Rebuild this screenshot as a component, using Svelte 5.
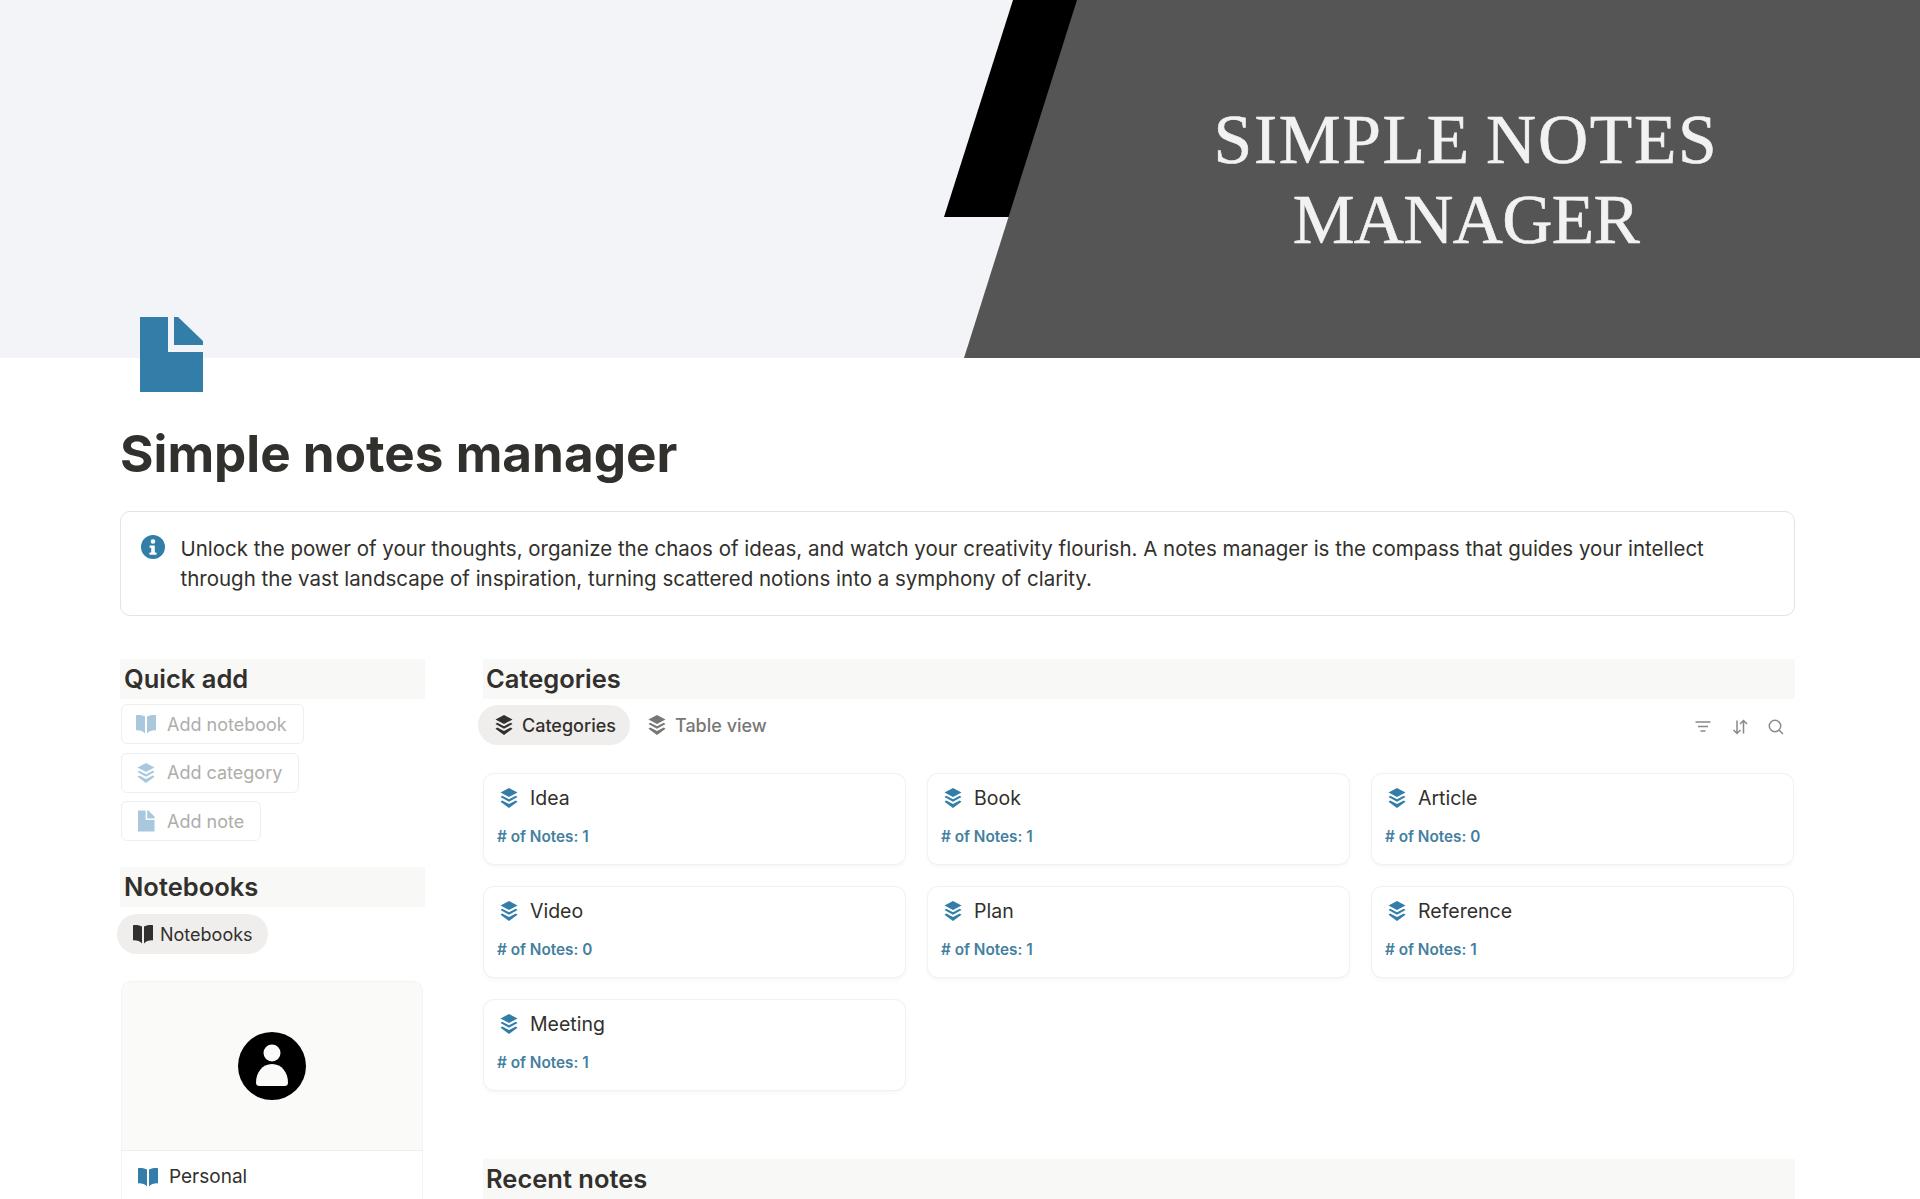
<script>
  const categorias = [
    { name: 'Idea', notes: 1 },
    { name: 'Book', notes: 1 },
    { name: 'Article', notes: 0 },
    { name: 'Video', notes: 0 },
    { name: 'Plan', notes: 1 },
    { name: 'Reference', notes: 1 },
    { name: 'Meeting', notes: 1 }
  ];

  const layers = 'M12 2 20.500 6.500 12 11 3.500 6.500Z M5.200 9.700 12 13.300 18.800 9.700 20.500 11 12 15.700 3.500 11Z M5.200 14.400 12 18 18.800 14.400 20.500 15.700 12 22 3.500 15.700Z';
  const book = 'M11 4.600C9 3.400 5.600 2.800 2 3.200V18.400C5.600 18.200 9 19 11 21.600Z M13 4.600C15 3.400 18.400 2.800 22 3.200V18.400C18.400 18.200 15 19 13 21.600Z';
  const doc = 'M4 1.500H11.600V11H20.500V22.500H4Z M13.200 1.500H14.400L20.500 7.600V9.400H13.200Z';
</script>

<div class="page">
  <header class="cover">
    <div class="franja"></div>
    <div class="gris"></div>
    <div class="cover-title">SIMPLE NOTES<br /><span>MANAGER</span></div>
  </header>

  <main class="content">
    <svg class="page-icon" viewBox="0 0 63 75" aria-hidden="true">
      <path d="M0 0H28V35H63V75H0Z M34 0H38L63 24V28H34Z" fill="#337ea9" />
    </svg>

    <h1>Simple notes manager</h1>

    <div class="callout">
      <svg class="info" viewBox="0 0 24 24" aria-hidden="true">
        <path fill-rule="evenodd" d="M12 0a12 12 0 1 0 0 24 12 12 0 0 0 0-24Zm0 4.200a2.300 2.300 0 1 1 0 4.600 2.300 2.300 0 0 1 0-4.600ZM8.600 10.400h5.200v7h1.700v2.400h-7v-2.400h1.700v-4.600H8.600Z" fill="#337ea9" />
      </svg>
      <p>Unlock the power of your thoughts, organize the chaos of ideas, and watch your creativity flourish. A notes manager is the compass that guides your intellect through the vast landscape of inspiration, turning scattered notions into a symphony of clarity.</p>
    </div>

    <div class="columns">
      <aside class="left">
        <h2>Quick add</h2>
        <div class="quick">
          <button class="add">
            <svg viewBox="0 0 24 24"><path d={book} /></svg>
            Add notebook
          </button>
          <button class="add">
            <svg viewBox="0 0 24 24"><path d={layers} /></svg>
            Add category
          </button>
          <button class="add">
            <svg viewBox="0 0 24 24"><path d={doc} /></svg>
            Add note
          </button>
        </div>

        <h2 class="second">Notebooks</h2>
        <div class="pill notebooks">
          <svg viewBox="0 0 24 24"><path d={book} /></svg>
          Notebooks
        </div>

        <div class="gallery-card">
          <div class="gallery-cover">
            <svg class="avatar" viewBox="0 0 68 68" aria-hidden="true">
              <circle cx="34" cy="34" r="34" fill="#000" />
              <circle cx="34" cy="21" r="8.500" fill="#fafaf8" />
              <path d="M34 32C24 32 18 41 18 50.500Q18 54 21.500 54H46.500Q50 54 50 50.500C50 41 44 32 34 32Z" fill="#fafaf8" />
            </svg>
          </div>
          <div class="gallery-name">
            <svg viewBox="0 0 24 24"><path d={book} /></svg>
            Personal
          </div>
        </div>
      </aside>

      <section class="right">
        <h2>Categories</h2>
        <div class="tabs">
          <div class="pill">
            <svg viewBox="0 0 24 24"><path d={layers} /></svg>
            Categories
          </div>
          <div class="tab">
            <svg viewBox="0 0 24 24"><path d={layers} /></svg>
            Table view
          </div>
          <div class="tools">
            <svg viewBox="0 0 18 18"><path d="M1.500 4H16.500M4 8.500H14M6.500 13H11.500" /></svg>
            <svg viewBox="0 0 18 18"><path d="M6 2.500V15.500M2.500 12 6 15.500 9.500 12M12.500 15.500V2.500M9 6 12.500 2.500 16 6" /></svg>
            <svg viewBox="0 0 18 18"><circle cx="8" cy="8" r="5.700" /><path d="M12.200 12.200 16 16" /></svg>
          </div>
        </div>

        <div class="grid">
          {#each categorias as c}
            <div class="card">
              <div class="card-title">
                <svg viewBox="0 0 24 24"><path d={layers} /></svg>
                {c.name}
              </div>
              <div class="card-notes"># of Notes: {c.notes}</div>
            </div>
          {/each}
        </div>

        <h2 class="recent">Recent notes</h2>
      </section>
    </div>
  </main>
</div>

<style>
  :global(html), :global(body) {
    margin: 0;
    height: 1199px;
    overflow: hidden;
    background: #fff;
  }

  .page {
    height: 1199px;
    overflow: hidden;
    font-family: Inter, "Liberation Sans", sans-serif;
    color: #32302c;
  }

  .cover {
    position: relative;
    height: 358px;
    background: #f3f4f8;
    overflow: hidden;
  }

  .franja {
    position: absolute;
    inset: 0;
    background: #000;
    clip-path: polygon(1013px 0, 1080px 0, 1010px 217px, 944px 217px);
  }

  .gris {
    position: absolute;
    inset: 0;
    background: #555;
    clip-path: polygon(1077px 0, 100% 0, 100% 100%, 964px 100%);
  }

  .cover-title {
    position: absolute;
    left: 1116px;
    width: 700px;
    top: 100px;
    text-align: center;
    font-family: "Liberation Serif", serif;
    font-size: 69.500px;
    line-height: 80px;
    letter-spacing: 1.700px;
    word-spacing: -4px;
    color: #f2f2f2;
    -webkit-text-stroke: 0.6px #f2f2f2;
  }

  .cover-title span {
    letter-spacing: -0.700px;
  }

  .content {
    width: 1675px;
    margin-left: 120px;
  }

  .page-icon {
    position: relative;
    display: block;
    width: 63px;
    height: 75px;
    margin: -41px 0 0 20px;
  }

  h1 {
    margin: 31px 0 0;
    font-size: 51.200px;
    line-height: 60px;
    font-weight: 700;
  }

  .callout {
    box-sizing: border-box;
    display: flex;
    align-items: flex-start;
    gap: 16px;
    height: 105px;
    margin-top: 28px;
    padding: 22px 24px 0 19.500px;
    border: 1.500px solid #e3e3e1;
    border-radius: 10px;
  }

  .info {
    flex: none;
    width: 24px;
    height: 24px;
    margin-top: 1px;
  }

  .callout p {
    margin: 0;
    font-size: 20.500px;
    line-height: 30px;
  }

  .columns {
    display: grid;
    grid-template-columns: 305px 1fr;
    gap: 58px;
    margin-top: 43px;
  }

  h2 {
    margin: 0;
    height: 40px;
    padding-left: 3px;
    background: #f8f8f7;
    font-size: 25.500px;
    line-height: 39px;
    font-weight: 600;
  }

  .left h2 {
    padding-left: 4px;
  }

  .second {
    margin-top: 26px;
  }

  .left svg,
  .tabs svg,
  .card svg {
    flex: none;
  }

  .quick {
    display: flex;
    flex-direction: column;
    align-items: flex-start;
    gap: 8.500px;
    margin-top: 5px;
  }

  .add {
    box-sizing: border-box;
    display: flex;
    align-items: center;
    gap: 9px;
    height: 40px;
    margin-left: 1px;
    padding: 0 16px 0 12px;
    background: #fff;
    border: 1px solid #efefed;
    border-radius: 6px;
    font: inherit;
    font-size: 18px;
    color: #aeadaa;
  }

  .add svg {
    width: 24px;
    height: 24px;
    fill: #a9c8de;
  }

  .pill {
    display: inline-flex;
    align-items: center;
    gap: 6px;
    box-sizing: border-box;
    height: 40px;
    padding: 0 16px;
    border-radius: 20px;
    background: #efeeec;
    font-size: 18px;
    font-weight: 500;
  }

  .pill svg {
    width: 24px;
    height: 24px;
    fill: #32302c;
  }

  .notebooks {
    margin: 7px 0 0 -3px;
    padding: 0 15px 0 14px;
    gap: 5px;
    font-size: 18px;
    font-weight: 400;
  }

  .gallery-card {
    box-sizing: border-box;
    margin-top: 27px;
    width: 302px;
    margin-left: 1px;
    border-radius: 10px 10px 0 0;
    border: 1px solid #f3f3f1;
    border-bottom: 0;
    overflow: hidden;
  }

  .gallery-cover {
    display: flex;
    align-items: center;
    justify-content: center;
    height: 168px;
    background: #fafaf8;
    border-bottom: 1.500px solid #efefed;
  }

  .avatar {
    width: 68px;
    height: 68px;
  }

  .gallery-name {
    display: flex;
    align-items: center;
    gap: 9px;
    padding: 12px 14px;
    font-size: 19px;
    line-height: 28px;
  }

  .gallery-name svg {
    width: 24px;
    height: 24px;
    fill: #337ea9;
  }

  .tabs {
    display: flex;
    align-items: center;
    gap: 6px;
    height: 40px;
    margin: 6px 0 0 -5px;
  }

  .tabs .pill {
    padding: 0 14px 0 14px;
  }

  .tab {
    display: flex;
    align-items: center;
    gap: 6px;
    padding: 0 9px;
    font-size: 18px;
    font-weight: 500;
    color: #787774;
  }

  .tab svg {
    width: 24px;
    height: 24px;
    fill: #787774;
  }

  .tools {
    display: flex;
    align-items: center;
    gap: 18.500px;
    margin: 3px 10px 0 auto;
  }

  .tools svg {
    width: 18px;
    height: 18px;
    fill: none;
    stroke: #8a8987;
    stroke-width: 1.500;
  }

  .grid {
    display: grid;
    grid-template-columns: repeat(3, 421px);
    gap: 23px;
    margin: 29px 0 0 1px;
  }

  .card {
    box-sizing: border-box;
    height: 90px;
    padding: 10px 13px;
    border-radius: 10px;
    background: #fff;
    box-shadow: 0 0 0 1px #f2f2f0, 0 2px 5px rgba(15, 15, 15, 0.05);
  }

  .card-title {
    display: flex;
    align-items: center;
    gap: 9px;
    height: 28px;
    font-size: 19.500px;
  }

  .card-title svg {
    width: 24px;
    height: 24px;
    fill: #337ea9;
  }

  .card-notes {
    margin-top: 14px;
    font-size: 15.300px;
    line-height: 22px;
    font-weight: 600;
    color: #447f9f;
  }

  .recent {
    margin-top: 69px;
  }
</style>
